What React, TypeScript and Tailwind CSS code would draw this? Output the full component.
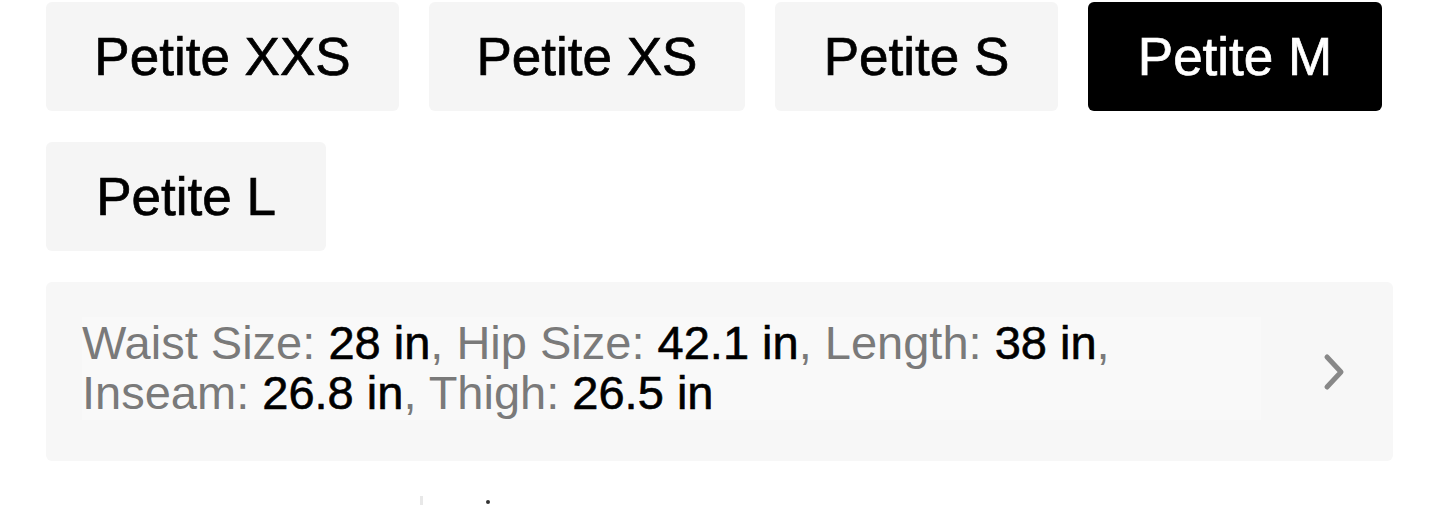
import React from "react";

const sizes = [
  { label: "Petite XXS", w: "w-[353px]", active: false },
  { label: "Petite XS", w: "w-[316px]", active: false },
  { label: "Petite S", w: "w-[283px]", active: false },
  { label: "Petite M", w: "w-[294px]", active: true },
  { label: "Petite L", w: "w-[280px]", active: false },
];

export default function App() {
  return (
    <div
      className="w-[1440px] h-[505px] overflow-hidden bg-white pl-[46px] pr-[47px] pt-[2px]"
      style={{ fontFamily: '"Liberation Sans", Arial, sans-serif' }}
    >
      <div className="flex flex-wrap gap-x-[30px] gap-y-[31px] w-[1347px]">
        {sizes.map((s) => (
          <button
            key={s.label}
            className={
              s.active
                ? `${s.w} h-[109px] rounded-[6px] bg-black text-white text-[53px] leading-none flex items-center justify-center [-webkit-text-stroke:0.7px_white]`
                : `${s.w} h-[109px] rounded-[6px] bg-[#f5f5f5] text-black text-[53px] leading-none flex items-center justify-center [-webkit-text-stroke:0.7px_black]`
            }
          >
            {s.label}
          </button>
        ))}
      </div>

      <div className="mt-[31px] w-[1347px] h-[179px] rounded-[6px] bg-[#f7f7f7] flex items-start pt-[35px] pl-[36px]">
        <div className="w-[1179px] h-[103px] bg-[#f9f9f9] text-[47px] leading-[50px] pt-[1px] text-[#7a7a7a]">
          <div className="whitespace-nowrap">
            Waist Size: <span className="text-black [-webkit-text-stroke:0.6px_black]">28 in</span>, Hip Size:{" "}
            <span className="text-black [-webkit-text-stroke:0.6px_black]">42.1 in</span>, Length:{" "}
            <span className="text-black [-webkit-text-stroke:0.6px_black]">38 in</span>,
          </div>
          <div className="whitespace-nowrap">
            Inseam: <span className="text-black [-webkit-text-stroke:0.6px_black]">26.8 in</span>, Thigh:{" "}
            <span className="text-black [-webkit-text-stroke:0.6px_black]">26.5 in</span>
          </div>
        </div>
        <div className="ml-[60px] mt-[36px]">
          <svg width="26" height="38" viewBox="0 0 26 38" fill="none">
            <path
              d="M6 4 L20 19 L6 34"
              stroke="#888888"
              strokeWidth="5"
              strokeLinecap="round"
              strokeLinejoin="round"
            />
          </svg>
        </div>
      </div>

      <div className="mt-[35px] flex items-start">
        <div className="ml-[374px] w-[3px] h-[12px] bg-[#e8e8e8]" />
        <div className="ml-[63px] mt-[4px] w-[4px] h-[4px] rounded-full bg-[#333]" />
      </div>
    </div>
  );
}
